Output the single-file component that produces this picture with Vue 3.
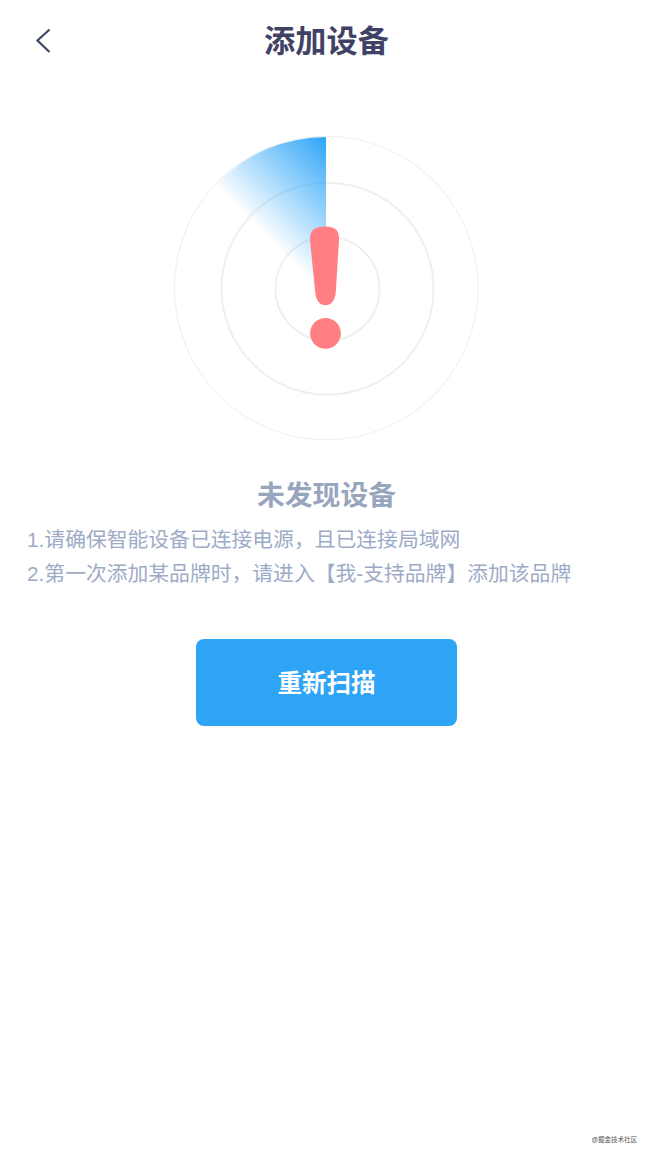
<script setup>
const tips = [
  '1.请确保智能设备已连接电源，且已连接局域网',
  '2.第一次添加某品牌时，请进入【我-支持品牌】添加该品牌'
]
</script>

<template>
  <div class="page">
    <header class="header">
      <svg class="header__back" width="16" height="26" viewBox="0 0 16 26">
        <path d="M14.5 1.5 2.5 12.5 14.5 24" fill="none" stroke="#3c4a66" stroke-width="2.2" />
      </svg>
      <h1 class="header__title">添加设备</h1>
    </header>

    <div class="radar">
      <svg class="radar__rings" width="306" height="306" viewBox="0 0 306 306">
        <circle cx="152.2" cy="152" r="151.8" fill="none" stroke="#eeeeee" stroke-width="1" />
        <circle cx="153.5" cy="152.7" r="106" fill="none" stroke="#efefef" stroke-width="2" />
        <circle cx="153.5" cy="152.7" r="52" fill="none" stroke="#efefef" stroke-width="2" />
      </svg>
      <div class="radar__sweep"></div>
      <svg class="radar__mark" width="306" height="306" viewBox="0 0 306 306">
        <path d="M136 104C135.8 94 141 90.6 151 90.6C161 90.6 165.4 94 165 104L161.8 156C161.2 165 156.5 169.3 151.5 169.3C146.5 169.3 141.8 165 141.2 156Z" fill="#ff7f83" />
        <circle cx="151.5" cy="197.3" r="15.4" fill="#ff7f83" />
      </svg>
    </div>

    <h2 class="result">未发现设备</h2>
    <p v-for="tip in tips" :key="tip" class="tip">{{ tip }}</p>

    <button class="rescan">重新扫描</button>

    <span class="mark">@掘金技术社区</span>
  </div>
</template>

<style scoped>
.page {
  position: relative;
  width: 653px;
  height: 1159px;
  background: #fff;
  overflow: hidden;
  font-family: "Liberation Sans", "Noto Sans CJK SC", sans-serif;
}

.header {
  position: relative;
  display: flex;
  justify-content: center;
  align-items: center;
  height: 76px;
  padding-bottom: 6px;
}

.header__back {
  position: absolute;
  left: 35px;
  top: 28px;
}

.header__title {
  margin: 0;
  font-size: 31.2px;
  font-weight: 700;
  color: #3f4264;
}

.radar {
  position: relative;
  width: 306px;
  height: 306px;
  margin: 54px 0 0 174px;
}

.radar__rings,
.radar__mark {
  position: absolute;
  left: 0;
  top: 0;
}

.radar__mark {
  filter: blur(0.6px);
}

.radar__sweep {
  position: absolute;
  left: 0.5px;
  top: 1px;
  width: 151px;
  height: 151px;
  border-top-left-radius: 100%;
  background: linear-gradient(45deg, rgba(46, 165, 248, 0) 47%, #2ea5f8 100%);
}

.result {
  margin: 33px 0 6px;
  text-align: center;
  font-size: 27.8px;
  line-height: 42px;
  font-weight: 700;
  color: #97a5bd;
}

.tip {
  margin: 0;
  padding-left: 27px;
  font-size: 20.8px;
  line-height: 33.5px;
  color: #9dabc7;
}

.rescan {
  display: block;
  width: 261px;
  height: 87px;
  margin: 49px 0 0 196px;
  padding: 0 0 3px;
  border: 0;
  border-radius: 8px;
  background: #2ea4f7;
  color: #fff;
  font-family: inherit;
  font-size: 24.5px;
  font-weight: 700;
}

.mark {
  position: absolute;
  right: 16px;
  bottom: 14px;
  font-size: 6.5px;
  line-height: 10px;
  color: #555;
}
</style>
